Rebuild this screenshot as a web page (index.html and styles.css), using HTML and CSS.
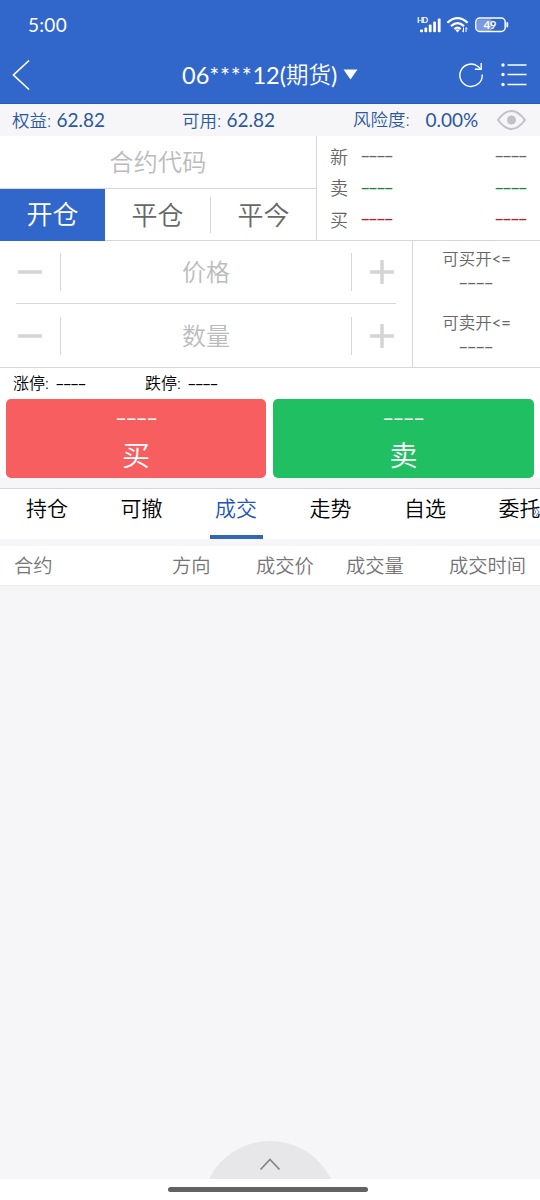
FILE: index.html
```html
<!DOCTYPE html>
<html lang="zh-CN">
<head>
<meta charset="utf-8">
<meta name="viewport" content="width=device-width, initial-scale=1">
<title>期货交易</title>
<link rel="stylesheet" href="styles.css">
</head>
<body>
<div class="app">
  <div class="status">
    <span class="time">5:00</span>
    <svg class="status-icons" width="94" height="20" viewBox="0 0 94 20">
      <text class="hd" x="1" y="8.3" textLength="11">HD</text>
      <g fill="#fff"><rect x="4" y="14.5" width="3" height="2.7" rx="1"/><rect x="8.4" y="12.5" width="2.8" height="4.7" rx="1"/><rect x="12.8" y="9.5" width="2.8" height="7.7" rx="1"/><rect x="17.2" y="6.5" width="2.8" height="10.7" rx="1"/><rect x="21.8" y="3.4" width="2.8" height="13.8" rx="1"/></g>
      <g transform="translate(1 0)" fill="none" stroke="#fff" stroke-width="2.2"><path d="M30.4 7.8Q40.5-1.6 50.6 7.8"/><path d="M34 11.1Q40.5 5.1 47 11.1"/><path d="M37.3 14Q40.5 11.2 43.7 14"/></g>
      <path d="M39 14.5h5l-2.500 3z" fill="#fff"/>
      <path d="M47.500 12.500v4.500l-1.500-1.400M50 17v-4.500l1.500 1.400" fill="none" stroke="#fff"/>
      <rect x="61" y="4.200" width="15" height="11.600" rx="2" fill="#7b9be0"/>
      <rect x="59.800" y="3" width="29.400" height="13.500" rx="4" fill="none" stroke="#fff" stroke-width="1.500"/>
      <path d="M91.300 8v3.500" stroke="#fff" stroke-width="1.800" stroke-linecap="round"/>
      <text class="battery" x="67.500" y="14" textLength="13">49</text>
    </svg>
  </div>
  <header class="header">
    <svg class="back" width="18" height="32" viewBox="0 0 18 32"><path d="M17 1.500 1.500 16 17 30.500" fill="none" stroke="#fff" stroke-width="1.700"/></svg>
    <h1 class="title"><span class="stars-num">06<span class="stars">****</span>12(</span>期货<span class="stars-num">)</span></h1>
    <svg class="caret" width="15" height="11" viewBox="0 0 15 11"><path d="M.5.500h14l-7 10z" fill="#fff"/></svg>
    <svg class="refresh" width="25" height="26" viewBox="0 0 25 26" fill="none" stroke="#fff" stroke-width="1.400"><path d="M23.200 12.500A11.200 11.200 0 1 1 18.600 4.200L22 7"/><path d="M22.200 1v6.300h-6.400"/></svg>
    <svg class="menu" width="26" height="26" viewBox="0 0 26 26"><path d="M6.500 3h19M6.500 12.500h19M6.500 22.500h19" stroke="#fff" stroke-width="1.600"/><g fill="#fff"><circle cx="2" cy="3" r="1.700"/><circle cx="2" cy="12.500" r="1.700"/><circle cx="2" cy="22.500" r="1.700"/></g></svg>
  </header>
  <section class="account">
    <span>权益: <b>62.82</b></span>
    <span>可用: <b>62.82</b></span>
    <span>风险度:</span>
    <b>0.00%</b>
    <svg class="eye" width="29" height="22" viewBox="0 0 29 22"><path d="M1 11Q14.500-7 28 11 14.500 29 1 11Z" fill="none" stroke="#c1c1cc" stroke-width="2"/><circle cx="14.500" cy="11" r="4.500" fill="#c1c1cc"/></svg>
  </section>
  <section class="contract">
    <div class="contract-form">
      <div class="code">合约代码</div>
      <div class="modes"><span class="mode active">开仓</span><span class="mode">平仓</span><span class="mode split">平今</span></div>
    </div>
    <div class="quotes">
      <div class="quote"><span>新</span><i class="dash">----</i><i class="dash end">----</i></div>
      <div class="quote green"><span>卖</span><i class="dash">----</i><i class="dash end">----</i></div>
      <div class="quote red"><span>买</span><i class="dash">----</i><i class="dash end">----</i></div>
    </div>
  </section>
  <section class="order">
    <div class="steppers">
      <div class="stepper">
        <svg class="minus" width="24" height="24" viewBox="0 0 24 24"><path d="M0 12h24" stroke="#d5d5d5" stroke-width="3.500"/></svg>
        <span class="field">价格</span>
        <svg class="plus" width="24" height="24" viewBox="0 0 24 24"><path d="M0 12h24M12 0v24" stroke="#d5d5d5" stroke-width="3.500"/></svg>
      </div>
      <div class="stepper">
        <svg class="minus" width="24" height="24" viewBox="0 0 24 24"><path d="M0 12h24" stroke="#d5d5d5" stroke-width="3.500"/></svg>
        <span class="field">数量</span>
        <svg class="plus" width="24" height="24" viewBox="0 0 24 24"><path d="M0 12h24M12 0v24" stroke="#d5d5d5" stroke-width="3.500"/></svg>
      </div>
    </div>
    <div class="limits">
      <div class="limit"><span>可买开<em>&lt;=</em></span><i class="dash">----</i></div>
      <div class="limit"><span>可卖开<em>&lt;=</em></span><i class="dash">----</i></div>
    </div>
  </section>
  <section class="range"><span>涨停: <i class="dash">----</i></span><span>跌停: <i class="dash">----</i></span></section>
  <section class="actions">
    <div class="action buy"><i class="dash">----</i><span>买</span></div>
    <div class="action sell"><i class="dash">----</i><span>卖</span></div>
  </section>
  <nav class="tabs">
    <span class="tab">持仓</span><span class="tab">可撤</span><span class="tab current">成交</span><span class="tab">走势</span><span class="tab">自选</span><span class="tab">委托</span>
    <svg class="more" width="8" height="10" viewBox="0 0 8 10"><path d="M1 1l3 4-3 4M4 1l3 4-3 4" fill="none" stroke="#5272b8" stroke-width=".9"/></svg>
  </nav>
  <section class="columns"><span>合约</span><span>方向</span><span>成交价</span><span>成交量</span><span>成交时间</span></section>
  <main class="list">
    <svg class="drawer" width="122" height="38" viewBox="0 0 122 38"><path d="M0 38A68 68 0 0 1 122 38Z" fill="#e7e7e9"/><path d="m51.500 28.500 9.500-10 9.500 10" fill="none" stroke="#858585" stroke-width="1.700"/></svg>
  </main>
  <footer class="home"><span class="home-bar"></span></footer>
</div>
</body>
</html>
```
FILE: styles.css
```css
* { box-sizing: border-box; }
body { margin: 0; font-family: Lato, "Noto Sans CJK SC", sans-serif; font-weight: 350; }
svg { display: block; flex: none; }
b, i, em { font-weight: 400; font-style: normal; }
.app { width: 540px; height: 1200px; display: flex; flex-direction: column; overflow: hidden; background: #fff; white-space: nowrap; }
.app > * { flex: none; }
.status { height: 48px; background: #3166cb; color: #fff; display: flex; justify-content: space-between; padding: 15px 30px 0 28px; font-size: 19px; line-height: 20px; }
.time { font-weight: 400; letter-spacing: .3px; }
.hd { font: 700 8px Lato, sans-serif; fill: #fff; }
.battery { font: 700 11.5px Lato, sans-serif; fill: #fff; }
.header { height: 56px; background: #3166cb; border-bottom: 1px solid #2858af; color: #fff; display: flex; align-items: center; padding: 0 13px 3px 12px; }
.back { margin-top: 1px; }
.title { margin: 2px 0 0 152px; width: 156px; font-size: 22.5px; font-weight: 350; line-height: 30px; display: flex; }
.stars-num { font-size: 23.5px; font-weight: 400; }
.stars { letter-spacing: .8px; }
.caret { margin: 1px 0 0 5px; }
.refresh { margin: 2px 0 0 101px; }
.menu { margin: 2px 0 0 auto; }
.account { height: 32px; background: #f6f6f8; color: #2b579f; display: grid; grid-template-columns: 170px 171px 72px 72px 29px; align-items: center; padding-left: 12px; font-size: 17.5px; line-height: 30px; }
.account b { font-size: 19px; margin-left: .5px; }
.contract { height: 105px; display: flex; border-bottom: 1px solid #d6d6d6; }
.contract-form { width: 317px; border-right: 1px solid #d6d6d6; }
.code { height: 53px; border-bottom: 1px solid #d6d6d6; color: #bbbbbe; font-size: 24px; line-height: 52px; text-align: center; letter-spacing: .3px; }
.modes { display: flex; height: 52px; align-items: center; color: #686868; }
.mode { flex: 1; font-size: 26px; line-height: 36px; text-align: center; }
.active { height: 52px; background: #3166cb; color: #fff; line-height: 51px; }
.split { border-left: 1px solid #d6d6d6; }
.quotes { flex: 1; padding: 4px 13px 0; display: flex; flex-direction: column; color: #666; }
.quote { height: 31.5px; display: flex; align-items: center; font-size: 18px; }
.quote > span { width: 31px; }
.dash { display: inline-block; font-family: Lato, sans-serif; font-size: 17px; width: 33px; transform: scaleX(1.65); transform-origin: 0 50%; letter-spacing: -1.55px; }
.quote .dash { margin-left: -.8px; }
.quote .end { margin-left: auto; }
.green .dash { color: #168638; }
.red .dash { color: #c41722; }
.order { height: 127px; display: flex; border-bottom: 1px solid #d6d6d6; }
.steppers { width: 413px; padding: 0 16px; border-right: 1px solid #d6d6d6; }
.stepper { height: 63px; display: flex; align-items: center; padding: 0 2px; }
.stepper:first-child { border-bottom: 1px solid #d6d6d6; }
.field { height: 38px; margin-left: 18px; width: 292px; border: solid #d6d6d6; border-width: 0 1px; color: #bbbbbe; font-size: 24px; line-height: 38px; text-align: center; }
.plus { margin-left: 18px; }
.limits { flex: 1; padding-top: 7px; color: #666; }
.limit { height: 64px; display: flex; flex-direction: column; align-items: center; font-size: 16.5px; line-height: 23px; }
.limit .dash { width: 37px; letter-spacing: -1.15px; }
.range { height: 31px; display: flex; align-items: center; padding: 0 0 3px 13px; font-size: 16px; color: #000; }
.range > span { width: 132px; }
.range .dash { font-size: 16px; margin-left: 1.5px; transform: scaleX(1.6); letter-spacing: -1.3px; }
.actions { height: 79px; display: grid; grid-template-columns: 260px 261px; gap: 7px; padding: 0 6px; }
.action { border-radius: 5px; color: #fff; display: flex; flex-direction: column; align-items: center; font-size: 28px; line-height: 38px; }
.action .dash { width: 43px; font-size: 22px; transform: scaleX(1.5); letter-spacing: -1.3px; line-height: 37px; }
.buy { background: #f75e60; }
.sell { background: #20bf62; }
.tabs { position: relative; height: 68px; border-top: 10px solid #f6f6f8; border-bottom: 7px solid #f6f6f8; display: flex; padding-left: 20.5px; gap: 42.500px; overflow: hidden; box-shadow: inset 0 1px #d6d6d6; font-size: 21px; line-height: 40px; color: #000; }
.tab { flex: none; width: 53px; margin-right: -1px; text-align: center; }
.current { color: #2455b4; border-bottom: 4px solid #3166b7; }
.more { position: absolute; right: 0; top: 19px; }
.columns { height: 40px; display: grid; grid-template-columns: 158px 84px 90px 103px auto; padding-left: 14px; font-size: 19.300px; line-height: 39px; color: #757575; border-bottom: 1px solid #eee; }
.app > .list { flex: 1; background: #f6f6f8; display: flex; justify-content: center; align-items: flex-end; }
.home { height: 21px; padding-top: 8px; }
.home-bar { display: block; width: 200px; height: 5px; margin: 0 auto 0 168px; border-radius: 3px; background: #626262; }
```
